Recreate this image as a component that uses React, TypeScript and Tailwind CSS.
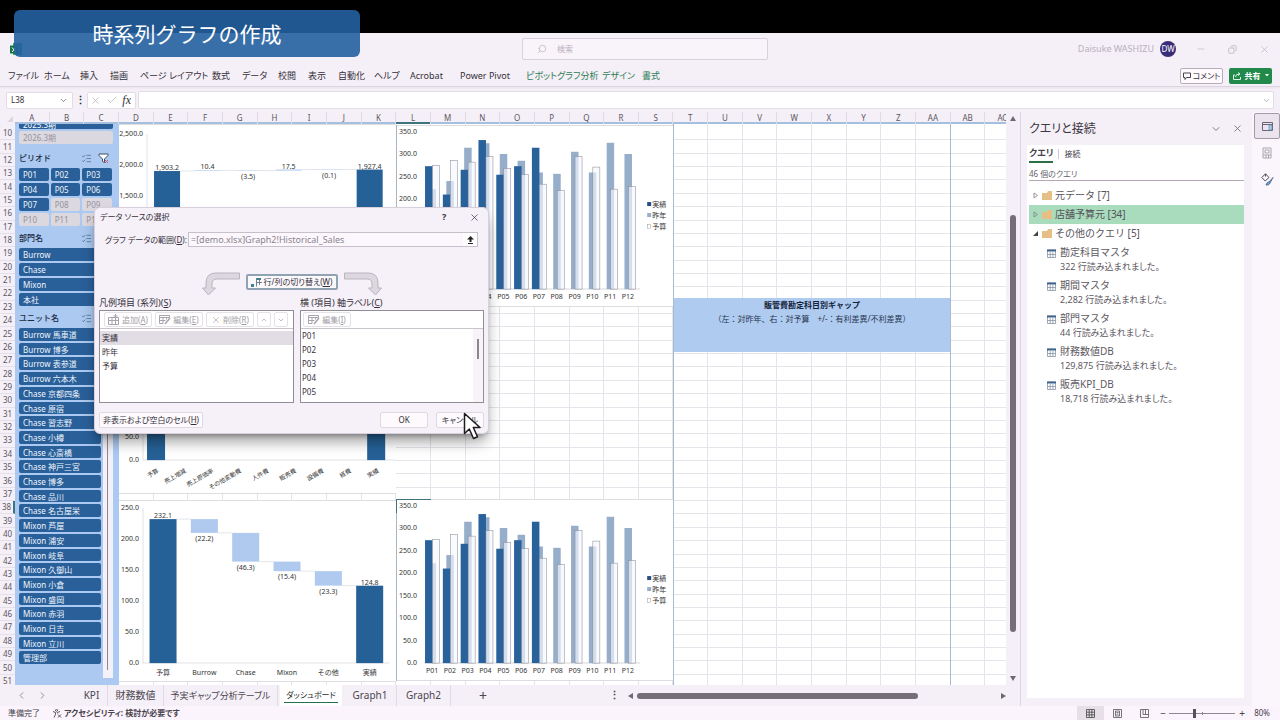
import { useState } from 'react'
import type { ReactNode } from 'react'
import {
  Check,
  ChevronDown,
  ChevronLeft,
  ChevronRight,
  ChevronUp,
  Copy,
  ListChecks,
  Minus,
  Search,
  X,
} from 'lucide-react'

// ─── Data ─────────────────────────────────────────────────────────────────────

const RIBBON_TABS = [
  { label: 'ファイル', width: 'w-9' },
  { label: 'ホーム', width: 'w-9' },
  { label: '挿入', width: 'w-[30px]' },
  { label: '描画', width: 'w-[30px]' },
  { label: 'ページ レイアウト', width: 'w-[72px]' },
  { label: '数式', width: 'w-[30px]' },
  { label: 'データ', width: 'w-9' },
  { label: '校閲', width: 'w-[30px]' },
  { label: '表示', width: 'w-[30px]' },
  { label: '自動化', width: 'w-9' },
  { label: 'ヘルプ', width: 'w-9' },
  { label: 'Acrobat', width: 'w-[50px]' },
  { label: 'Power Pivot', width: 'w-[66px]' },
  { label: 'ピボットグラフ分析', width: 'w-[76px]', contextual: true },
  { label: 'デザイン', width: 'w-10', contextual: true },
  { label: '書式', width: 'w-10', contextual: true },
]

const COLUMNS = 'A B C D E F G H I J K L M N O P Q R S T U V W X Y Z AA AB'.split(' ')
const ROWS = Array.from({ length: 42 }, (_, i) => i + 10)

const PERIODS = Array.from({ length: 12 }, (_, i) => `P${String(i + 1).padStart(2, '0')}`)
const DEPARTMENTS = ['Burrow', 'Chase', 'Mixon', '本社']
const UNITS = [
  'Burrow 馬車道', 'Burrow 博多', 'Burrow 表参道', 'Burrow 六本木',
  'Chase 京都四条', 'Chase 原宿', 'Chase 習志野', 'Chase 小樽', 'Chase 心斎橋',
  'Chase 神戸三宮', 'Chase 博多', 'Chase 品川', 'Chase 名古屋栄',
  'Mixon 芦屋', 'Mixon 浦安', 'Mixon 岐阜', 'Mixon 久御山', 'Mixon 小倉',
  'Mixon 盛岡', 'Mixon 赤羽', 'Mixon 日吉', 'Mixon 立川', '管理部',
]

const ACTUAL = [273, 210, 265, 331, 254, 273, 314]
const LAST_YEAR = [222, 240, 314, 324, 300, 285, 259, 256, 305, 259, 325, 300]
const BUDGET = [275, 286, 282, 294, 268, 254, 233, 219, 294, 271, 222, 228]

const QUERIES = [
  ['勘定科目マスタ', '322 行読み込まれました。'],
  ['期間マスタ', '2,282 行読み込まれました。'],
  ['部門マスタ', '44 行読み込まれました。'],
  ['財務数値DB', '129,875 行読み込まれました。'],
  ['販売KPI_DB', '18,718 行読み込まれました。'],
]

// ─── Charts ───────────────────────────────────────────────────────────────────

interface Step {
  label: string
  from: number
  to: number
  text?: string
}

interface WaterfallProps {
  steps: Step[]
  ticks: string[]
  tickTop: number
  tickGap: number
  axisX: number
  max: number
  base: number
  first: number
  pitch: number
  barWidth: number
  slanted?: boolean
}

function Waterfall({ steps, ticks, tickTop, tickGap, axisX, max, base, first, pitch, barWidth, slanted }: WaterfallProps) {
  const y = (v: number) => base - (v / max) * (base - tickTop)
  return (
    <svg viewBox="0 0 277 182" className="block w-full bg-white" fontSize="7" fill="#333">
      <path d="M0 .5H277M0 181.5H277" stroke="#dedde2" />
      <path d={`M${axisX} ${tickTop}V${base}H${first + pitch * (steps.length - 1) + 20}`} fill="none" stroke="#e3e2e6" />
      {ticks.map((t, i) => (
        <text key={t} x={axisX - 4} y={tickTop + i * tickGap + 2} textAnchor="end">{t}</text>
      ))}
      {steps.map((s, i) => {
        const cx = first + i * pitch
        const top = y(Math.max(s.from, s.to))
        const total = s.from === 0
        const negative = s.to < s.from
        return (
          <g key={s.label}>
            {i < steps.length - 1 && (
              <path d={`M${cx + barWidth / 2} ${y(s.to)}h${pitch - barWidth}`} stroke="#c9ccd2" strokeWidth=".5" />
            )}
            <rect
              x={cx - barWidth / 2}
              y={top}
              width={barWidth}
              height={Math.max(Math.abs(y(s.from) - y(s.to)), 0.5)}
              fill={total ? '#256196' : '#b0c9ee'}
            />
            {s.text && (
              <text x={cx} y={negative ? y(s.to) + 8 : top - 1} textAnchor="middle">{s.text}</text>
            )}
            {slanted ? (
              <text fontSize="6" textAnchor="end" transform={`translate(${cx + 3} ${base + 12}) rotate(-30)`}>{s.label}</text>
            ) : (
              <text x={cx} y={base + 12} textAnchor="middle">{s.label}</text>
            )}
          </g>
        )
      })}
    </svg>
  )
}

function SalesHistory({ selected }: { selected?: boolean }) {
  const base = 164
  const h = (v: number) => v * 0.45
  return (
    <svg viewBox="0 0 277 182" className="block w-full bg-white" fontSize="7" fill="#333">
      <path d="M0 .5H277M0 181.5H277" stroke="#dedde2" />
      <path d="M.5 0V182" stroke="#a9b6c6" />
      {/* edge of the active cell, L38 */}
      {selected && <path d="M.5 14V.5H35" fill="none" stroke="#3d7480" />}
      {[0, 50, 100, 150, 200, 250, 300, 350].map(v => (
        <text key={v} x="21" y={base - h(v) + 2} textAnchor="end">{v.toFixed(1)}</text>
      ))}
      <path d={`M28 ${base}H244`} stroke="#d8d8dc" />
      {PERIODS.map((p, i) => {
        const c = 36 + i * 17.8
        return (
          <g key={p}>
            <rect x={c - 3.5} y={base - h(LAST_YEAR[i])} width="7.500" height={h(LAST_YEAR[i])} fill="#97aecb" />
            {ACTUAL[i] && (
              <rect x={c - 7} y={base - h(ACTUAL[i])} width="7.5" height={h(ACTUAL[i])} fill="#29629b" />
            )}
            <rect
              x={c + 0.5}
              y={base - h(BUDGET[i])}
              width="7"
              height={h(BUDGET[i])}
              fill="#f4f7ff"
              fillOpacity=".65"
              stroke="#85858f"
              strokeWidth=".5"
            />
            <text x={c} y={base + 10} textAnchor="middle">{p}</text>
          </g>
        )
      })}
      <rect x="251" y="77" width="4" height="4" fill="#244f85" />
      <rect x="251" y="88" width="4" height="4" fill="#97aecb" />
      <rect x="251.500" y="99.500" width="3" height="4" fill="#fff" stroke="#999" strokeWidth=".5" />
      <text x="256" y="82">実績</text>
      <text x="256" y="93">昨年</text>
      <text x="256" y="104">予算</text>
    </svg>
  )
}

// ─── Slicers ──────────────────────────────────────────────────────────────────

function SlicerHeader({ title }: { title: string }) {
  return (
    <div className="flex h-5 shrink-0 items-center justify-between pr-1 text-[8px] font-medium text-[#1b2b42]">
      <span>{title}</span>
      <span className="flex gap-1.5">
        <ListChecks size={11} strokeWidth={1.5} className="text-[#4b5f7c]" />
        <svg width="11" height="11" viewBox="0 0 11 11" fill="none" stroke="#3f4f69">
          <path d="M1 1h9v1.500L6.500 6v3.500L4.500 8.500V6L1 2.500z" fill="#fff" />
          <path d="M7 7l3 3M10 7l-3 3" stroke="#c75a70" />
        </svg>
      </span>
    </div>
  )
}

function SlicerItem({ label, off }: { label: string; off?: boolean }) {
  return (
    <button
      className={`min-h-0 flex-1 overflow-hidden rounded-xs px-1 text-left text-[8px] leading-[13px] whitespace-nowrap
        ${off ? 'bg-[#dcd8df] text-[#96929c]' : 'bg-[#29609a] text-[#eef4fc]'}`}
    >
      {label}
    </button>
  )
}

function Slicers() {
  return (
    <div className="flex min-w-0 flex-15 flex-col overflow-hidden bg-[#abc9f1]">
      <div className="flex flex-1 flex-col pr-1.5 pl-1">
        <div className="flex h-[5px] shrink-0 flex-col justify-end overflow-hidden rounded-b-xs bg-[#29609a] pl-1 text-[8px] leading-[8px] text-white">
          2025.3期
        </div>
        <div className="mt-0.5 flex h-[13px] shrink-0">
          <SlicerItem label="2026.3期" off />
        </div>
        <div className="h-1 shrink-0" />
        <SlicerHeader title="ピリオド" />
        <div className="grid h-[58px] shrink-0 grid-cols-3 grid-rows-4 gap-0.5 pr-px">
          {PERIODS.map((p, i) => <SlicerItem key={p} label={p} off={i > 6} />)}
        </div>
        <div className="h-0.5 shrink-0" />
        <SlicerHeader title="部門名" />
        <div className="flex h-[58px] shrink-0 flex-col gap-0.5 pr-px">
          {DEPARTMENTS.map(d => <SlicerItem key={d} label={d} />)}
        </div>
        <div className="h-0.5 shrink-0" />
        <SlicerHeader title="ユニット名" />
        <div className="flex h-[350px] shrink-0">
          <div className="flex h-[336px] min-w-0 flex-1 flex-col gap-0.5">
            {UNITS.map(u => <SlicerItem key={u} label={u} />)}
          </div>
          <div className="ml-0.5 flex w-2.5 justify-center bg-[#f4f1f8] py-2">
            <div className="w-px bg-[#8d8792]" />
          </div>
        </div>
      </div>
    </div>
  )
}

// ─── Sheet ────────────────────────────────────────────────────────────────────

function Sheet() {
  return (
    <div className="flex min-w-0 flex-1 flex-col [font-feature-settings:normal]">
      <div className="flex h-3 shrink-0 text-[8px] leading-[12px] text-[#5c5761]">
        <div className="flex w-[15px] items-end justify-end p-0.5">
          <svg width="6" height="6" viewBox="0 0 6 6"><path d="M6 0v6H0z" fill="#ddd6e0" /></svg>
        </div>
        {COLUMNS.map(c => (
          <div
            key={c}
            className={`min-w-0 flex-5 border-b-2 text-center
              ${c === 'L' ? 'border-b-[#3d7480]' : 'border-b-[#a5c0de]'}`}
          >
            <div className="border-r border-[#e2dae5]">{c}</div>
          </div>
        ))}
        <div className="min-w-0 flex-3 overflow-hidden border-b-2 border-b-[#a5c0de]">
          <div className="pl-3">AC</div>
        </div>
      </div>

      <div className="flex min-h-0 flex-1 overflow-hidden">
        <div className="-mb-[3px] flex w-[15px] shrink-0 flex-col pt-[3px] text-[8px] text-[#5c5761]">
          {ROWS.map(r => (
            <div key={r} className={`flex min-h-0 flex-1 items-center justify-center border-b border-[#e6dfe9] ${r === 38 ? 'border-r-2 border-r-[#3d7480]' : ''}`}>
              {r}
            </div>
          ))}
        </div>

        <div className="relative flex min-w-0 flex-1 items-stretch bg-white">
          {/* cell lines, under everything that floats on the sheet */}
          <div className="absolute inset-0 flex">
            {COLUMNS.map(c => (
              <div key={c} className="flex flex-5">
                <div className="flex-1 border-r border-[#e4e5eb]" />
              </div>
            ))}
            <div className="flex-3" />
          </div>
          <div className="absolute inset-x-0 top-[3px] -bottom-[3px] flex flex-col">
            {ROWS.map(r => <div key={r} className="flex-1 border-b border-[#e4e5eb]" />)}
          </div>

          <div className="relative flex min-w-0 flex-1">
            <Slicers />
            <div className="min-w-0 flex-40 space-y-1.5">
              <Waterfall
                steps={[
                  { label: '予算', from: 0, to: 1903.2, text: '1,903.2' },
                  { label: 'Burrow', from: 1903.2, to: 1913.6, text: '10.4' },
                  { label: 'Chase', from: 1913.6, to: 1910.1, text: '(3.5)' },
                  { label: 'Mixon', from: 1910.1, to: 1927.6, text: '17.5' },
                  { label: 'その他', from: 1927.6, to: 1927.5, text: '(0.1)' },
                  { label: '実績', from: 0, to: 1927.4, text: '1,927.4' },
                ]}
                ticks={['2,500.0', '2,000.0', '1,500.0', '1,000.0', '500.0', '0.0']}
                tickTop={10}
                tickGap={31}
                axisX={28}
                max={2500}
                base={165}
                first={48}
                pitch={40.5}
                barWidth={26}
              />
              <Waterfall
                steps={[
                  { label: '予算', from: 0, to: 232.1 },
                  { label: '売上増減', from: 232.1, to: 220 },
                  { label: '売上原価率', from: 220, to: 205 },
                  { label: 'その他変動費', from: 205, to: 190 },
                  { label: '人件費', from: 190, to: 170 },
                  { label: '販売費', from: 170, to: 160 },
                  { label: '設備費', from: 160, to: 145 },
                  { label: '経費', from: 145, to: 124.8 },
                  { label: '実績', from: 0, to: 124.8 },
                ]}
                ticks={['300.0', '250.0', '200.0', '150.0', '100.0', '50.0', '0.0']}
                tickTop={10}
                tickGap={23}
                axisX={24}
                max={300}
                base={148}
                first={37}
                pitch={27.5}
                barWidth={18}
                slanted
              />
              <Waterfall
                steps={[
                  { label: '予算', from: 0, to: 232.1, text: '232.1' },
                  { label: 'Burrow', from: 232.1, to: 209.9, text: '(22.2)' },
                  { label: 'Chase', from: 209.9, to: 163.6, text: '(46.3)' },
                  { label: 'Mixon', from: 163.6, to: 148.2, text: '(15.4)' },
                  { label: 'その他', from: 148.2, to: 124.9, text: '(23.3)' },
                  { label: '実績', from: 0, to: 124.8, text: '124.8' },
                ]}
                ticks={['250.0', '200.0', '150.0', '100.0', '50.0', '0.0']}
                tickTop={8}
                tickGap={31}
                axisX={24}
                max={250}
                base={163}
                first={44}
                pitch={41.3}
                barWidth={27}
              />
            </div>
            <div className="min-w-0 flex-40 space-y-48 pt-px">
              <SalesHistory />
              <SalesHistory selected />
            </div>
            <div className="flex min-w-0 flex-40">
              <div className="flex-1 border-x border-[#a9b9d0] pt-[174px]">
                <div className="h-[54px] bg-[#afcbef] text-center text-[8px] leading-[14px] text-[#26354f]">
                  <p className="font-bold text-[#14223b]">販管費勘定科目別ギャップ</p>
                  <p>（左：対昨年、右：対予算　+/-：有利差異/不利差異）</p>
                </div>
              </div>
            </div>
            <div className="min-w-0 flex-8" />
          </div>
        </div>
      </div>
    </div>
  )
}

function VerticalScroll() {
  return (
    <div className="flex w-3.5 shrink-0 flex-col items-center py-1">
      <svg width="6" height="5" viewBox="0 0 6 5"><path d="M3 0l3 5H0z" fill="#6f6872" /></svg>
      <div className="flex w-1.5 flex-1 flex-col py-1">
        <div className="flex-90" />
        <div className="flex-418 rounded-full bg-[#756e79]" />
        <div className="flex-40" />
      </div>
      <svg width="6" height="5" viewBox="0 0 6 5"><path d="M3 5l3-5H0z" fill="#6f6872" /></svg>
    </div>
  )
}

function SheetTabs() {
  const tab = 'h-full whitespace-nowrap border-r border-[#e0d8e3] text-center'
  return (
    <div className="flex h-[21px] shrink-0 items-center text-[10px] text-[#4c4650]">
      <div className="flex w-[76px] shrink-0 gap-2.5 pl-4 text-[#8d8691]">
        <button aria-label="前のシート"><ChevronLeft size={11} /></button>
        <button aria-label="次のシート"><ChevronRight size={11} /></button>
      </div>
      <button className={`${tab} w-8`}>KPI</button>
      <button className={`${tab} w-[56px]`}>財務数値</button>
      <button className={`${tab} w-[114px] text-[9px]`}>予実ギャップ分析テーブル</button>
      <button className="mx-0.5 h-full w-[62px] bg-white px-1 text-[8px] whitespace-nowrap text-[#2a2b2a]">
        <span className="block border-b border-[#28704d] leading-[14px]">ダッシュボード</span>
      </button>
      <button className={`${tab} w-[53px]`}>Graph1</button>
      <button className={`${tab} w-[54px]`}>Graph2</button>
      <button className="w-[64px] text-sm leading-4">+</button>
      <span className="ml-auto pr-2 text-[11px] font-bold">⋮</span>
      <div className="flex w-[392px] shrink-0 items-center gap-1 pr-3.5">
        <svg width="5" height="6" viewBox="0 0 5 6"><path d="M0 3l5-3v6z" fill="#6f6872" /></svg>
        <div className="h-1.5 w-[281px] rounded-full bg-[#756e79]" />
        <svg width="5" height="6" viewBox="0 0 5 6" className="ml-auto"><path d="M5 3L0 0v6z" fill="#6f6872" /></svg>
      </div>
    </div>
  )
}

// ─── Queries pane ─────────────────────────────────────────────────────────────

function FolderRow({ label, open, selected }: { label: string; open?: boolean; selected?: boolean }) {
  return (
    <button
      className={`flex h-[19px] w-full items-center pl-1 text-[10px] text-[#57525b] [font-feature-settings:normal]
        ${selected ? 'bg-[#a8dcbc]' : ''}`}
    >
      <svg width="6" height="7" viewBox="0 0 6 7" fill="none" stroke="#817b86" strokeWidth=".8">
        {open ? <path d="M5 1v5H0z" fill="#444" stroke="none" /> : <path d="M1 1l3.500 2.500L1 6z" />}
      </svg>
      <svg width="11" height="9" viewBox="0 0 11 9" className="mr-[3px] ml-0.5"><path d="M1 2l5 0 1-2h4v9H1z" fill="#e5bf85" /></svg>
      {label}
    </button>
  )
}

function TableIcon() {
  return (
    <svg width="9" height="9" viewBox="0 0 9 9" fill="none" stroke="#8793a4" strokeWidth=".8">
      <path d="M.5 1h8v7.500h-8zM.5 5.500h8M3.200 3v5.500M5.900 3v5.500" fill="#fff" />
      <path d="M0 1.500h9" stroke="#3f628e" strokeWidth="2" />
    </svg>
  )
}

function QueriesPane() {
  const [tab, setTab] = useState<'query' | 'connection'>('query')
  return (
    <aside className="flex w-[232px] shrink-0 flex-col border-l border-[#ded5e2] pr-2 pb-2 pl-1.5">
      <div className="flex h-[33px] shrink-0 items-center pl-0.5">
        <h2 className="flex-1 text-[12px] text-[#3c3740]">クエリと接続</h2>
        <button aria-label="オプション"><ChevronDown size={12} strokeWidth={1.5} className="text-[#5b555f]" /></button>
        <button aria-label="閉じる" className="mr-px ml-2.5"><X size={11} strokeWidth={1.5} className="text-[#5b555f]" /></button>
      </div>
      <div className="flex-1 bg-white pl-0.5">
        <div className="flex text-[9px] text-[#47424b]">
          <button
            onClick={() => setTab('query')}
            className={`h-[18px] ${tab === 'query' ? 'border-b-2 border-[#2c7048] font-bold' : ''}`}
          >
            クエリ
          </button>
          <span className="mx-[5px] my-1 w-px bg-[#cfc8d2]" />
          <button
            onClick={() => setTab('connection')}
            className={`h-[18px] text-[8px] ${tab === 'connection' ? 'border-b-2 border-[#2c7048] font-bold' : ''}`}
          >
            接続
          </button>
        </div>
        <p className="mb-[5px] border-b border-[#b4a8b4] pt-1 text-[8px] leading-[13px] text-[#68636c]">46 個のクエリ</p>
        <FolderRow label="元データ [7]" />
        <FolderRow label="店舗予算元 [34]" selected />
        <FolderRow label="その他のクエリ [5]" open />
        <ul>
          {QUERIES.map(([name, status]) => (
            <li key={name} className="flex h-[33px] gap-1 pt-0.5 pl-[18px] text-[#5d5862]">
              <span className="pt-1"><TableIcon /></span>
              <div>
                <p className="text-[10px] leading-[15px] [font-feature-settings:normal]">{name}</p>
                <p className="text-[9px] leading-[13px]">{status}</p>
              </div>
            </li>
          ))}
        </ul>
      </div>
    </aside>
  )
}

function PaneRail() {
  return (
    <div className="flex w-7 shrink-0 flex-col items-center bg-[#fbf5fc] pt-px pl-0.5">
      <button aria-label="クエリと接続" className="flex size-[26px] items-center justify-center rounded-xs border border-[#a29ba5] bg-[#ebe4ee]">
        <svg width="11" height="9" viewBox="0 0 11 9" fill="none" stroke="#6b6671">
          <path d="M.5.500h10v8H.5zM.5 2.500h10" />
          <path d="M7 3h3v5H7z" fill="#a5cbea" stroke="#5e86ab" strokeWidth=".6" />
        </svg>
      </button>
      <button aria-label="プロパティ" className="mt-2">
        <svg width="10" height="12" viewBox="0 0 10 12" fill="none" stroke="#aaa4ae">
          <path d="M1 1h8v10H1zM3 3h4v3H3zM1 8h8M4 8v3M6.500 8v3" />
        </svg>
      </button>
      <button aria-label="書式設定" className="mt-3.5">
        <svg width="13" height="13" viewBox="0 0 13 13" fill="none" stroke="#4b4d57">
          <path d="M4.500.8L8 4.500 4.200 8 .8 4.500zM4.500.8V3.500" />
          <path d="M12 4.500L8 9c-1.500 0-2.500 1-3 3 2 .3 3.500-.3 4-2z" fill="#6ea3cf" stroke="#41607f" strokeWidth=".8" />
        </svg>
      </button>
    </div>
  )
}

// ─── Select data source dialog ────────────────────────────────────────────────

function GridEditIcon() {
  return (
    <svg width="12" height="11" viewBox="0 0 12 11" fill="none" stroke="#a9a3ad" className="shrink-0">
      <path d="M.5 1.500h10v2H.5zM.5 3.500v6H4M.5 6.500h6M4 3.500v6M7.500 3.500v2" />
      <path d="M11 4L6 10" strokeWidth="1.500" />
    </svg>
  )
}

function ListTool({ children, label, small }: { children?: ReactNode; label?: string; small?: boolean }) {
  return (
    <button
      disabled
      aria-label={label}
      className={`flex h-[15px] shrink-0 items-center justify-center gap-0.5 rounded-xs border border-[#e6e0e9] text-[8px] whitespace-nowrap text-[#a29ca6]
        ${small ? 'w-[14px]' : 'w-12'}`}
    >
      {children}
    </button>
  )
}

function BentArrow({ flip }: { flip?: boolean }) {
  return (
    <svg width="38" height="24" viewBox="0 0 38 24" className={flip ? '-scale-x-100' : ''}>
      <path d="M37.500 1v6H15q-5 0-5 5v4h3.500L6.500 23 .5 16H4v-5Q4 1 14 1z" fill="#ddd8e0" stroke="#bab4be" />
    </svg>
  )
}

function DataSourceDialog() {
  const [range, setRange] = useState('=[demo.xlsx]Graph2!Historical_Sales')
  const [series, setSeries] = useState('実績')
  const plain = 'rounded-xs border border-[#e0d8e3] bg-[#fdfafd] h-4 whitespace-nowrap'
  return (
    <div
      role="dialog"
      aria-label="データ ソースの選択"
      className="absolute top-[207px] left-[94px] flex h-[227px] w-[395px] flex-col rounded-md border border-[#d9d0dd] bg-[#f6f0f8] px-1 text-[8px] text-[#35303a] shadow-lg shadow-black/40"
    >
      <div className="flex h-[18px] items-center pr-1 pl-px">
        <span className="flex-1">データ ソースの選択</span>
        <button aria-label="ヘルプ" className="w-[27px] text-left text-[9px] font-bold">?</button>
        <button aria-label="閉じる"><X size={11} strokeWidth={1.5} /></button>
      </div>

      <div className="mt-1.5 flex h-[15px] items-center pr-1.5 pl-1.5">
        <label htmlFor="range" className="w-[83px] shrink-0 whitespace-nowrap">グラフ データの範囲(<u>D</u>):</label>
        <div className="flex h-full flex-1 border border-[#c7c0ca] bg-[#fbf7fc]">
          <input
            id="range"
            value={range}
            onChange={e => setRange(e.target.value)}
            className="min-w-0 flex-1 px-0.5 text-[9px] text-[#8a848e] outline-none"
          />
          <button aria-label="範囲を折りたたむ" className="flex w-[14px] items-center justify-center bg-white">
            <svg width="7" height="8" viewBox="0 0 7 8"><path d="M3.500 0L7 3.500H4.500V6h-2V3.500H0zM1 7h5v1H1z" fill="#222" /></svg>
          </button>
        </div>
      </div>

      <div className="mt-[25px] flex h-6 items-start justify-center gap-1.5">
        <BentArrow />
        <button className="mt-0.5 flex h-4 w-[92px] items-center justify-center gap-0.5 rounded-xs border-2 border-[#8fa3b3] bg-[#fbf8fc] whitespace-nowrap">
          <svg width="11" height="9" viewBox="0 0 11 9" fill="none" stroke="#71818f">
            <path d="M5.500 0v8.500M5.500 4.500H11M8.500 2v5" />
            <path d="M0 6h3v3H0zM6 0h4v2H6z" fill="#3e8196" stroke="none" />
          </svg>
          <span>行/列の切り替え(<u>W</u>)</span>
        </button>
        <BentArrow flip />
      </div>

      <div className="flex gap-1.5">
        <section className="w-[195px]">
          <h3 className="text-[9px] leading-[14px]">凡例項目 (系列)(<u>S</u>)</h3>
          <div className="h-[93px] border border-[#928c96] bg-white">
            <div className="flex h-[18px] items-center gap-[3px] border-b border-[#c9c3cc] pl-1">
              <ListTool>
                <svg width="12" height="11" viewBox="0 0 12 11" fill="none" stroke="#a9a3ad" className="shrink-0">
                  <path d="M.5 3.500h10v7H.5zM.5 6.500h10M4 3.500v7M7.500 0v10.500M5.500 2h4" />
                </svg>
                <span>追加(<u>A</u>)</span>
              </ListTool>
              <ListTool><GridEditIcon /><span>編集(<u>E</u>)</span></ListTool>
              <ListTool><X size={10} strokeWidth={1.5} /><span>削除(<u>R</u>)</span></ListTool>
              <ListTool label="上へ" small><ChevronUp size={8} /></ListTool>
              <ListTool label="下へ" small><ChevronDown size={8} /></ListTool>
            </div>
            <ul className="pt-0.5">
              {['実績', '昨年', '予算'].map(s => (
                <li key={s} className={series === s ? 'bg-[#e2dce5]' : ''}>
                  <button onClick={() => setSeries(s)} className="block w-full px-0.5 text-left leading-[14px]">{s}</button>
                </li>
              ))}
            </ul>
          </div>
        </section>
        <section className="flex-1">
          <h3 className="text-[9px] leading-[14px]">横 (項目) 軸ラベル(<u>C</u>)</h3>
          <div className="flex h-[93px] flex-col border border-[#928c96] bg-white">
            <div className="flex h-[18px] shrink-0 items-center border-b border-[#c9c3cc] pl-0.5">
              <ListTool><GridEditIcon /><span>編集(<u>I</u>)</span></ListTool>
            </div>
            <div className="flex flex-1">
              <ul className="flex-1 px-px text-[8px]">
                {PERIODS.slice(0, 5).map(p => <li key={p} className="leading-[14px]">{p}</li>)}
              </ul>
              <div className="flex w-2.5 justify-center bg-[#f7f3f8] py-2.5"><div className="h-5 w-0.5 bg-[#8d8691]" /></div>
            </div>
          </div>
        </section>
      </div>

      <div className="mt-[9px] flex items-center">
        <button className={`${plain} w-[104px]`}>非表示および空白のセル(<u>H</u>)</button>
        <button className={`${plain} mr-2 ml-auto w-[48px]`}>OK</button>
        <button className={`${plain} w-[48px]`}>キャンセル</button>
      </div>

      {/* mouse pointer */}
      <svg width="19" height="28" viewBox="0 0 19 28" className="absolute top-[204px] left-[368px]">
        <path d="M1.500 1.500v20l4.800-4.500 4.200 9.500 4-1.800-4.200-9.200h6.700z" fill="#fff" stroke="#1d1a20" strokeWidth="1.500" strokeLinejoin="round" />
      </svg>
    </div>
  )
}

// ─── App ──────────────────────────────────────────────────────────────────────

export default function App() {
  const [formula, setFormula] = useState('')
  return (
    <div className="relative flex min-h-screen flex-col overflow-hidden bg-[#f5eff7] font-['Noto_Sans','Noto_Sans_CJK_JP',sans-serif] text-[9px] text-[#35303a] [font-feature-settings:'palt']">
      <div className="h-[33px] shrink-0 bg-black" />

      {/* ── Title bar ── */}
      <header className="flex h-8 shrink-0 items-center">
        <div className="flex flex-1 items-center pl-2.5">
          <svg width="12" height="12" viewBox="0 0 12 12">
            <path d="M3 0h9v12H3z" fill="#30a567" />
            <path d="M0 2.500h8v8H0z" fill="#16753f" />
            <path d="M2 4.500l4 4.500M6 4.500L2 9" stroke="#fff" />
          </svg>
        </div>
        <label className="ml-2.5 flex h-[22px] w-[246px] items-center gap-2.5 rounded-xs border border-[#d8d0dc] bg-[#f9f3fa] px-3.5 text-[#b3abb7]">
          <Search size={10} strokeWidth={1.5} className="-scale-x-100" />
          <input aria-label="検索" placeholder="検索" className="min-w-0 flex-1 text-[8px] outline-none placeholder:text-[#b9b1bd]" />
        </label>
        <div className="flex flex-1 items-center justify-end pr-2.5 text-[#b9b1bd]">
          <span className="mr-1.5">Daisuke WASHIZU</span>
          <span className="flex size-4 items-center justify-center rounded-full bg-[#3a2d78] text-[8px] text-white">DW</span>
          <button aria-label="最小化" className="ml-5"><Minus size={10} strokeWidth={1.5} /></button>
          <button aria-label="元に戻す" className="ml-[22px]"><Copy size={9} strokeWidth={2} className="-scale-x-100" /></button>
          <button aria-label="閉じる" className="ml-[22px]"><X size={11} strokeWidth={1.5} /></button>
        </div>
      </header>

      {/* ── Ribbon tabs ── */}
      <nav className="flex h-[22px] shrink-0 items-center border-b border-[#dcd4df] pr-2 pl-2 shadow-xs">
        {RIBBON_TABS.map(t => (
          <button
            key={t.label}
            className={`${t.width} shrink-0 text-left whitespace-nowrap ${t.contextual ? 'text-[#2c7d55]' : ''}`}
          >
            {t.label}
          </button>
        ))}
        <button className="ml-auto flex h-4 w-[43px] shrink-0 items-center justify-center gap-0.5 rounded-xs border border-[#b7afba] bg-[#fdf9fd] text-[8px] whitespace-nowrap">
          <svg width="8" height="8" viewBox="0 0 8 8" fill="none" stroke="#444" className="shrink-0"><path d="M.5 1h7v4.500h-4L2 7.500v-2H.5z" /></svg>
          コメント
        </button>
        <button className="ml-1.5 flex h-4 w-[43px] shrink-0 items-center justify-center gap-1 rounded-xs bg-[#21894a] text-[8px] font-bold text-white">
          <svg width="8" height="8" viewBox="0 0 8 8" fill="none" stroke="#dff3e6"><path d="M2 3H.5v4.500h7V5M2.500 5q0-3 4-3M5 .5L7 2 5 3.500" /></svg>
          共有
          <svg width="4" height="3" viewBox="0 0 4 3"><path d="M0 0h4L2 2.500z" fill="#fff" /></svg>
        </button>
      </nav>

      {/* ── Formula bar ── */}
      <div className="flex h-[25px] shrink-0 items-center px-1.5 pt-px text-[8px]">
        <button className="flex h-[17px] w-[67px] items-center justify-between rounded-xs border border-[#e3dbe6] bg-white px-1">
          L38
          <ChevronDown size={9} strokeWidth={1.5} />
        </button>
        <span className="w-[14px] text-center text-[11px] leading-3 font-bold">⋮</span>
        <div className="flex h-[17px] w-[49px] items-center justify-between rounded-xs border border-[#e3dbe6] bg-white px-0.5">
          <button aria-label="キャンセル"><X size={11} strokeWidth={1.5} className="text-[#b5aeb8]" /></button>
          <button aria-label="入力"><Check size={12} strokeWidth={1.5} className="text-[#b5aeb8]" /></button>
          <button aria-label="関数の挿入" className="pr-0.5 font-['Liberation_Serif',serif] text-[12px] leading-3 italic">fx</button>
        </div>
        <div className="ml-0.5 flex h-[18px] flex-1 items-center rounded-xs border border-[#e3dbe6] bg-white pr-0.5">
          <input aria-label="数式バー" value={formula} onChange={e => setFormula(e.target.value)} className="flex-1 px-1 outline-none" />
          <ChevronDown size={9} strokeWidth={1.5} className="text-[#8d8691]" />
        </div>
      </div>

      <main className="flex min-h-0 flex-1">
        <div className="flex min-w-0 flex-1 flex-col">
          <div className="flex min-h-0 flex-1">
            <Sheet />
            <VerticalScroll />
          </div>
          <SheetTabs />
        </div>
        <QueriesPane />
        <PaneRail />
      </main>

      {/* ── Status bar ── */}
      <footer className="flex h-[14px] shrink-0 items-center bg-[#fbf4fc] pr-2.5 pl-2 text-[8px] text-[#47424b]">
        <span className="w-[44px]">準備完了</span>
        <svg width="10" height="10" viewBox="0 0 10 10" fill="none" stroke="#555" className="mr-0.5">
          <path d="M4.500 1.500a1 1 0 1 0 .1 0M1 3.500l2.500 1v2L2 9.500M8 3.500L5.500 4.500v1M6 6.500l3 3M9 6.500l-3 3" />
        </svg>
        <span className="font-bold">アクセシビリティ: 検討が必要です</span>
        <div className="ml-auto flex items-center">
          <button aria-label="標準" className="flex h-[14px] w-[27px] items-center justify-center bg-[#e6dfe8]">
            <svg width="9" height="9" viewBox="0 0 9 9" fill="none" stroke="#444" strokeWidth=".8"><path d="M.5.500h8v8h-8zM3.200.500v8M5.900.500v8M.5 3.200h8M.5 5.900h8" /></svg>
          </button>
          <button aria-label="ページ レイアウト" className="flex w-[27px] justify-center">
            <svg width="9" height="9" viewBox="0 0 9 9" fill="none" stroke="#555" strokeWidth=".8"><path d="M.5.500h8v8h-8zM2.500 2h4v5h-4zM3.500 3.500h2M3.500 5.200h2" /></svg>
          </button>
          <button aria-label="改ページ プレビュー" className="flex w-[27px] justify-center">
            <svg width="9" height="9" viewBox="0 0 9 9" fill="none" stroke="#555" strokeWidth=".8"><path d="M.5.500h8v8h-8zM3 .5v5h5.500M5.500.500v5" /></svg>
          </button>
          <button aria-label="縮小" className="w-2.5 text-[10px] leading-3">−</button>
          <svg width="68" height="9" viewBox="0 0 68 9"><path d="M1 4.500h66M34.500 3v3" stroke="#8f8893" /><path d="M25 0h3v9h-3z" fill="#57515b" /></svg>
          <button aria-label="拡大" className="w-3 text-[10px] leading-3">+</button>
          <span className="ml-1.5">80%</span>
        </div>
      </footer>

      <DataSourceDialog />

      {/* caption over the top left corner */}
      <h1 className="absolute top-[10px] left-[14px] flex h-[47px] w-[346px] items-center justify-center rounded-md bg-[#2560a0]/90 pt-0.5 text-[21px] text-white [font-feature-settings:normal]">
        時系列グラフの作成
      </h1>
    </div>
  )
}
